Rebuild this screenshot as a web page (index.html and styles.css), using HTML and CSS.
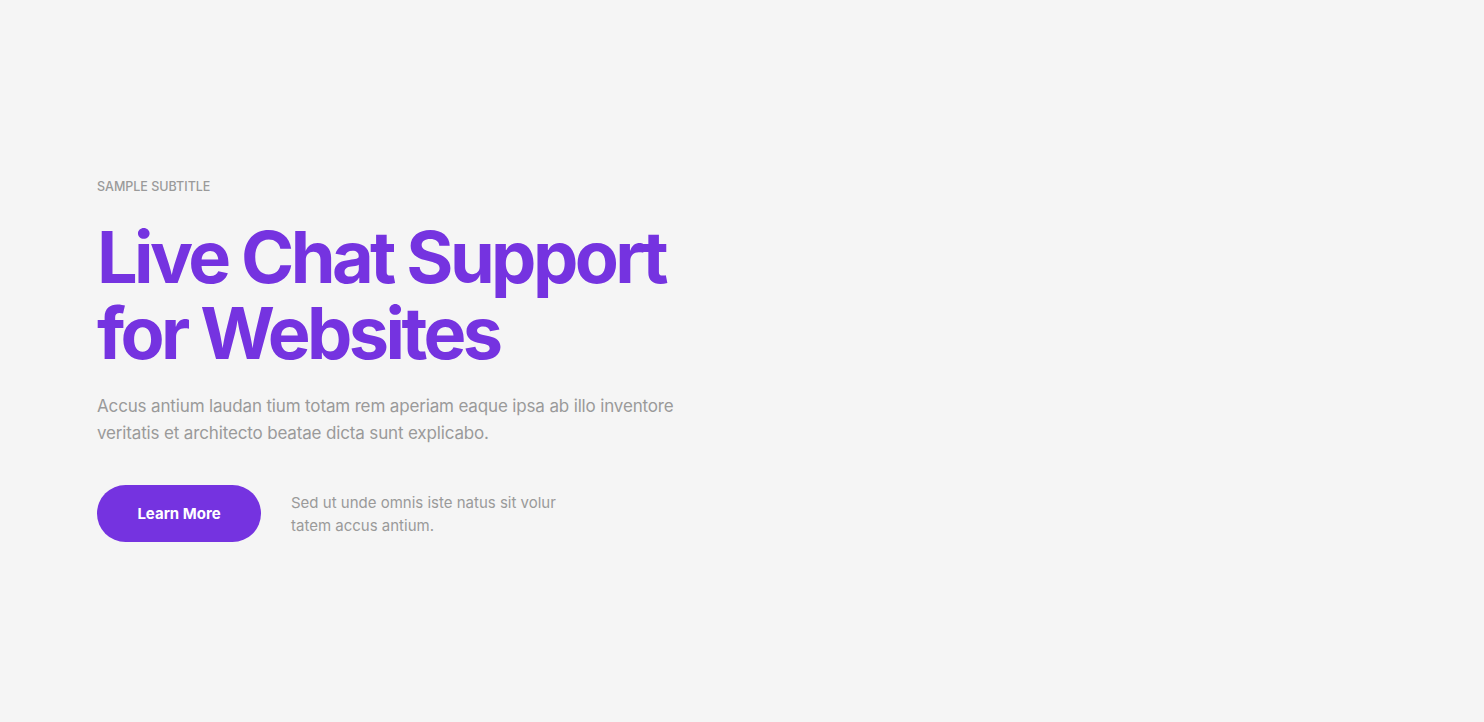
FILE: index.html
```html
<!DOCTYPE html>
<html lang="en">

<head>
    <meta charset="UTF-8">
    <meta name="viewport" content="width=device-width, initial-scale=1.0">
    <title>Live Chat Support</title>
    <link rel="stylesheet" href="styles.css">
</head>

<body>
    <section class="hero">
        <div class="hero-text">
            <span class="subtitle">SAMPLE SUBTITLE</span>
            <h1 class="title">Live Chat Support for Websites</h1>
            <p class="lead">Accus antium laudan tium totam rem aperiam eaque ipsa ab illo inventore veritatis et architecto beatae dicta sunt explicabo.</p>
            <div class="actions">
                <a class="btn" href="#">Learn More</a>
                <p class="note">Sed ut unde omnis iste natus sit volur tatem accus antium.</p>
            </div>
        </div>
    </section>
</body>

</html>
```

FILE: styles.css
```css
html, body {
    margin: 0;
}
body {
    background: #f5f5f5;
    font-family: Inter, "Noto Sans", sans-serif;
    color: #9a9a9a;
}
.hero {
    min-height: 722px;
    padding: 179px 97px 0;
    box-sizing: border-box;
}
.hero-text {
    width: 600px;
}
.subtitle {
    display: block;
    font-size: 12.5px;
    line-height: 16px;
    font-weight: 500;
    color: #9a9a9a;
}
.title {
    margin: 24px 0 0;
    font-size: 72px;
    line-height: 76px;
    font-weight: 700;
    letter-spacing: -3.6px;
    color: #7533e0;
}
.lead {
    margin: 22px 0 0;
    font-size: 17px;
    line-height: 27px;
    letter-spacing: -0.15px;
    width: 590px;
}
.actions {
    display: flex;
    align-items: center;
    gap: 30px;
    margin-top: 38px;
}
.btn {
    display: flex;
    align-items: center;
    justify-content: center;
    width: 164px;
    height: 57px;
    border-radius: 29px;
    background: #7533e0;
    color: #fff;
    font-size: 15px;
    font-weight: 700;
    text-decoration: none;
}
.note {
    margin: 0;
    width: 270px;
    font-size: 15px;
    line-height: 23px;
}
```
